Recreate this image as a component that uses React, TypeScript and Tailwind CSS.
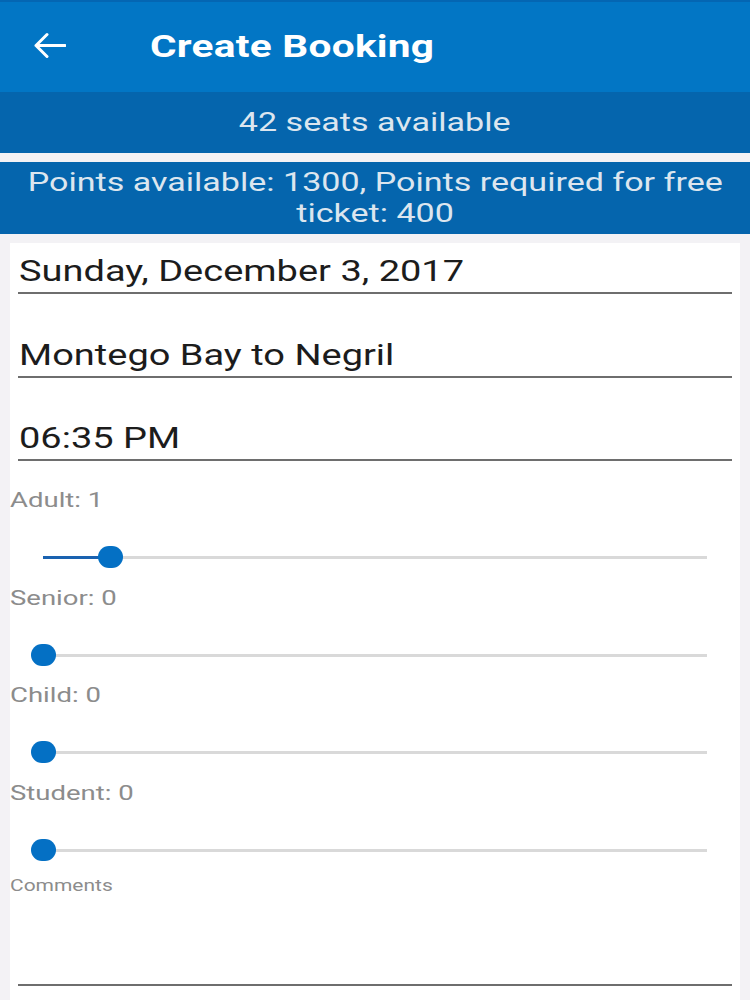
const sliders = [
    { label: "Adult", value: 1, pos: 67 },
    { label: "Senior", value: 0, pos: 0 },
    { label: "Child", value: 0, pos: 0 },
    { label: "Student", value: 0, pos: 0 },
];

// the screen is drawn a bit wide, so text is stretched on x
const Wide = ({ children, center }: { children: React.ReactNode; center?: boolean }) => (
    <span className={`inline-block scale-x-[1.31] ${center ? "origin-center" : "origin-left"}`}>{children}</span>
);

const Field = ({ text, className }: { text: string; className: string }) => (
    <div className={`mx-2 border-b-2 border-[#6e6e6e] ${className}`}>
        <div className="text-[29px] leading-[34px] text-[#1c1c1c] pl-[1px] pt-[2px]">
            <Wide>{text}</Wide>
        </div>
    </div>
);

const App = () => {
    return (
        <div className="w-[750px] h-[1000px] overflow-hidden bg-[#f3f2f5] font-['Roboto',sans-serif]">
            <div className="h-[92px] bg-[#0276c5] border-t-2 border-[#0466b3] flex items-center">
                <svg className="ml-[33px] -mt-[4px]" width="33" height="27" viewBox="0 0 33 27" fill="none">
                    <path d="M3 13.5H32M14 2.5L3 13.5L14 24.5" stroke="white" strokeWidth="3" strokeLinecap="round" strokeLinejoin="round" />
                </svg>
                <h1 className="ml-[84px] text-white font-bold text-[31px] tracking-[0.2px]">
                    <Wide>Create Booking</Wide>
                </h1>
            </div>
            <div className="h-[61px] bg-[#0565ad] flex items-center justify-center text-[26px] text-[#dce6ef]">
                <Wide center>42 seats available</Wide>
            </div>
            <div className="h-[9px]" />
            <div className="h-[72px] bg-[#0565ad] flex flex-col items-center justify-center text-[26px] leading-[31px] text-[#dce6ef] text-center">
                <Wide center>Points available: 1300, Points required for free</Wide>
                <Wide center>ticket: 400</Wide>
            </div>
            <div className="mt-[9px] mx-[10px] h-[800px] bg-white pt-[9px]">
                <Field text="Sunday, December 3, 2017" className="h-[42px]" />
                <Field text="Montego Bay to Negril" className="mt-[42px] h-[42px]" />
                <Field text="06:35 PM" className="mt-[41px] h-[42px]" />
                <div className="pt-[27px]">
                    {sliders.map((s) => (
                        <div key={s.label} className="h-[97.5px]">
                            <div className="text-[21px] leading-[24px] text-[#8c8c8c]">
                                <Wide>
                                    {s.label}: {s.value}
                                </Wide>
                            </div>
                            <div className="relative mt-[44px] ml-[33px] mr-[33px] h-[3px] bg-[#d9d9d9]">
                                <div className="absolute left-0 top-0 h-[3px] bg-[#1a62b0]" style={{ width: s.pos }} />
                                <div
                                    className="absolute top-[-10px] w-[25px] h-[22px] rounded-full bg-[#0470c4]"
                                    style={{ left: s.pos - 12 }}
                                />
                            </div>
                        </div>
                    ))}
                </div>
                <div className="-mt-[2px] text-[16px] leading-[20px] text-[#8c8c8c]">
                    <Wide>Comments</Wide>
                </div>
                <div className="mx-2 mt-[88px] border-b-2 border-[#6e6e6e]" />
            </div>
        </div>
    );
};

export default App;
